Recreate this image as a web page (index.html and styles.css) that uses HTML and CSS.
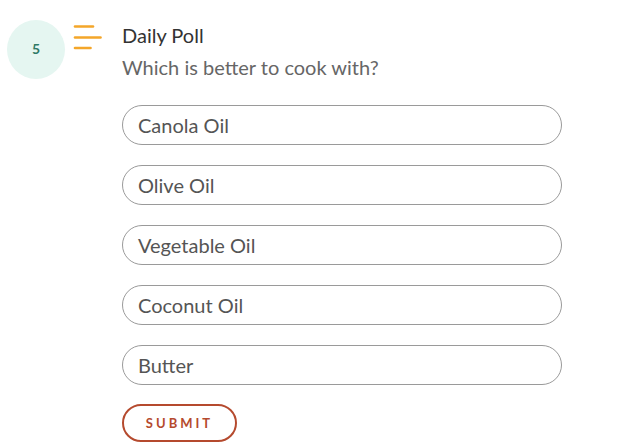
FILE: index.html
```html
<!DOCTYPE html>
<html>
<head>
<meta charset="utf-8">
<link rel="stylesheet" href="styles.css">
</head>
<body>
<div class="poll">
  <div class="badge"><span>5</span></div>
  <svg class="menu-icon" width="30" height="27" viewBox="0 0 30 27">
    <line x1="2" y1="2.5" x2="20" y2="2.5" />
    <line x1="2" y1="13.5" x2="27.5" y2="13.5" />
    <line x1="2" y1="24" x2="17.5" y2="24" />
  </svg>
  <div class="content">
    <h2 class="title">Daily Poll</h2>
    <p class="question">Which is better to cook with?</p>
    <div class="options">
      <div class="option">Canola Oil</div>
      <div class="option">Olive Oil</div>
      <div class="option">Vegetable Oil</div>
      <div class="option">Coconut Oil</div>
      <div class="option">Butter</div>
    </div>
    <button class="submit">SUBMIT</button>
  </div>
</div>
</body>
</html>
```
FILE: styles.css
```css
html, body {
  margin: 0;
  padding: 0;
  background: #ffffff;
}
body {
  font-family: Lato, "Open Sans", sans-serif;
  width: 622px;
  height: 447px;
  overflow: hidden;
}
.poll {
  display: flex;
  align-items: flex-start;
  padding: 20px 0 0 7px;
}
.badge {
  width: 58px;
  height: 59px;
  border-radius: 50%;
  background: #e5f6f1;
  display: flex;
  align-items: center;
  justify-content: center;
  flex: none;
}
.badge span {
  font-size: 14px;
  font-weight: 700;
  color: #2f7a66;
  margin-top: -2px;
}
.menu-icon {
  flex: none;
  margin: 4px 0 0 8px;
  stroke: #f4a62a;
  stroke-width: 2.6;
  stroke-linecap: round;
}
.content {
  margin-left: 19px;
  width: 440px;
}
.title {
  margin: 3px 0 0;
  font-size: 20px;
  font-weight: 400;
  line-height: 24px;
  color: #333333;
}
.question {
  margin: 8px 0 0;
  font-size: 20px;
  line-height: 24px;
  color: #666666;
}
.options {
  display: flex;
  flex-direction: column;
  gap: 20px;
  margin-top: 26px;
}
.option {
  box-sizing: border-box;
  height: 40px;
  border: 1px solid #9a9a9a;
  border-radius: 20px;
  padding: 0 15px;
  display: flex;
  align-items: center;
  font-size: 20px;
  line-height: 24px;
  color: #555555;
}
.submit {
  display: block;
  margin-top: 19px;
  box-sizing: border-box;
  width: 115px;
  height: 38px;
  border: 2px solid #b54a2e;
  border-radius: 19px;
  background: #ffffff;
  font-family: Lato, "Open Sans", sans-serif;
  font-size: 13px;
  font-weight: 700;
  letter-spacing: 3px;
  padding: 0;
  color: #b54a2e;
}
```
